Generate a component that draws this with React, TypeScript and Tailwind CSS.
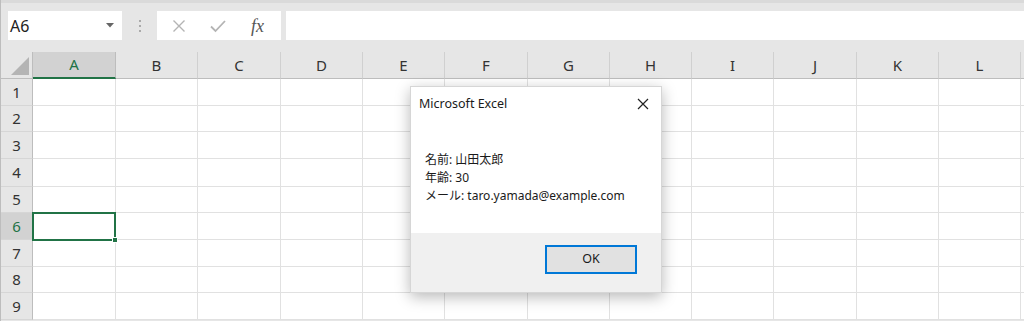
import React from 'react';

const COLS = ['A', 'B', 'C', 'D', 'E', 'F', 'G', 'H', 'I', 'J', 'K', 'L', ''];
const COL_W = [83, 82, 83, 82, 82, 83, 82, 82, 82, 83, 82, 82, 40];
const ROW_H = [27, 26, 27, 28, 26, 27, 27, 26, 27];

const gridCols = 'grid-cols-[32px_83px_82px_83px_82px_82px_83px_82px_82px_82px_83px_82px_82px_40px]';

const Dialog: React.FC = () => (
  <div className="absolute left-[409px] top-[86px] w-[252px] h-[207px] bg-white border border-[#d6d6d6] shadow-[0_4px_14px_rgba(0,0,0,0.28)] flex flex-col font-['Noto_Sans','Noto_Sans_CJK_JP',sans-serif] text-[#1a1a1a] z-20">
    <div className="flex items-center justify-between h-[32px] pl-[8px] pr-[12px] pt-[2px]">
      <span className="text-[12.5px]">Microsoft Excel</span>
      <svg width="12" height="12" viewBox="0 0 12 12" className="text-[#222]">
        <path d="M1 1L11 11M11 1L1 11" stroke="currentColor" strokeWidth="1.2" />
      </svg>
    </div>
    <div className="flex-1 pl-[14px] pt-[32px] text-[12px] leading-[18px]">
      <p>名前: 山田太郎</p>
      <p>年齢: 30</p>
      <p>メール: taro.yamada@example.com</p>
    </div>
    <div className="h-[59px] bg-[#f0f0f0] flex justify-end items-start pt-[12px] pr-[24px]">
      <button className="w-[92px] h-[29px] bg-[#e1e1e1] border-2 border-[#0078d7] text-[12.5px] text-[#1a1a1a]">OK</button>
    </div>
  </div>
);

export default function App() {
  return (
    <div className="relative w-[1024px] h-[321px] overflow-hidden bg-[#e6e6e6] font-['Noto_Sans','Noto_Sans_CJK_JP',sans-serif] border-l border-[#bdbdbd]">
      <div className="h-[3px] bg-[#dadada]" />
      <div className="flex items-start h-[49px] pt-[8px] pl-[7px]">
        <div className="w-[114px] h-[29px] bg-white flex items-center justify-between pl-[2px] pr-[8px]">
          <span className="text-[16px] text-[#222]">A6</span>
          <svg width="8" height="5" viewBox="0 0 8 5"><path d="M0 0H8L4 4.5Z" fill="#666" /></svg>
        </div>
        <div className="w-[35px] h-[29px] flex flex-col items-center justify-center gap-[3px]">
          <span className="w-[2px] h-[2px] bg-[#aaa]" />
          <span className="w-[2px] h-[2px] bg-[#aaa]" />
          <span className="w-[2px] h-[2px] bg-[#aaa]" />
        </div>
        <div className="w-[124px] h-[29px] bg-white flex items-center">
          <svg width="14" height="14" viewBox="0 0 14 14" className="ml-[15px]">
            <path d="M1.5 1.5L12.5 12.5M12.5 1.5L1.5 12.5" stroke="#b4b4b4" strokeWidth="1.4" />
          </svg>
          <svg width="16" height="14" viewBox="0 0 16 14" className="ml-[24px]">
            <path d="M1 7.5L5.5 12L15 2" stroke="#b4b4b4" strokeWidth="1.8" fill="none" />
          </svg>
          <span className="ml-[25px] text-[18px] italic text-[#555] font-['Liberation_Serif',serif] leading-none">fx</span>
        </div>
        <div className="ml-[5px] flex-1 h-[29px] bg-white" />
      </div>
      <div className={`grid ${gridCols} text-[#333]`}>
        <div className="h-[27px] relative bg-[#e6e6e6] border-r border-b border-[#bdbdbd]">
          <svg width="18" height="18" viewBox="0 0 18 18" className="absolute right-[3px] bottom-[3px]">
            <path d="M18 0V18H0Z" fill="#b4b4b4" />
          </svg>
        </div>
        {COLS.map((c, i) => (
          <div
            key={i}
            className={`h-[27px] flex items-center justify-center text-[15px] border-r ${i === 0 ? 'bg-[#d2d2d2] text-[#217346] border-b-2 border-b-[#217346] border-r-[#bdbdbd]' : 'bg-[#e6e6e6] border-b border-b-[#bdbdbd] border-r-[#d0d0d0]'}`}
          >
            {c}
          </div>
        ))}
        {ROW_H.map((h, r) => (
          <React.Fragment key={r}>
            <div
              style={{ height: h }}
              className={`flex items-center justify-center text-[15px] border-r border-b border-r-[#bdbdbd] border-b-[#d6d6d6] ${r === 5 ? 'bg-[#d2d2d2] text-[#217346]' : 'bg-[#e6e6e6]'}`}
            >
              {r + 1}
            </div>
            {COL_W.map((_, c) => (
              <div key={c} style={{ height: h }} className={`bg-white border-r border-b border-[#e1e1e1] relative ${r === 5 && c === 0 ? 'z-10' : ''}`}>
                {r === 5 && c === 0 && (
                  <div className="absolute -left-[1px] -top-[1px] w-[84px] h-[29px] border-2 border-[#217346]">
                    <span className="absolute -right-[4px] -bottom-[4px] w-[6px] h-[6px] bg-[#217346] border border-white" />
                  </div>
                )}
              </div>
            ))}
          </React.Fragment>
        ))}
      </div>
      <Dialog />
    </div>
  );
}
